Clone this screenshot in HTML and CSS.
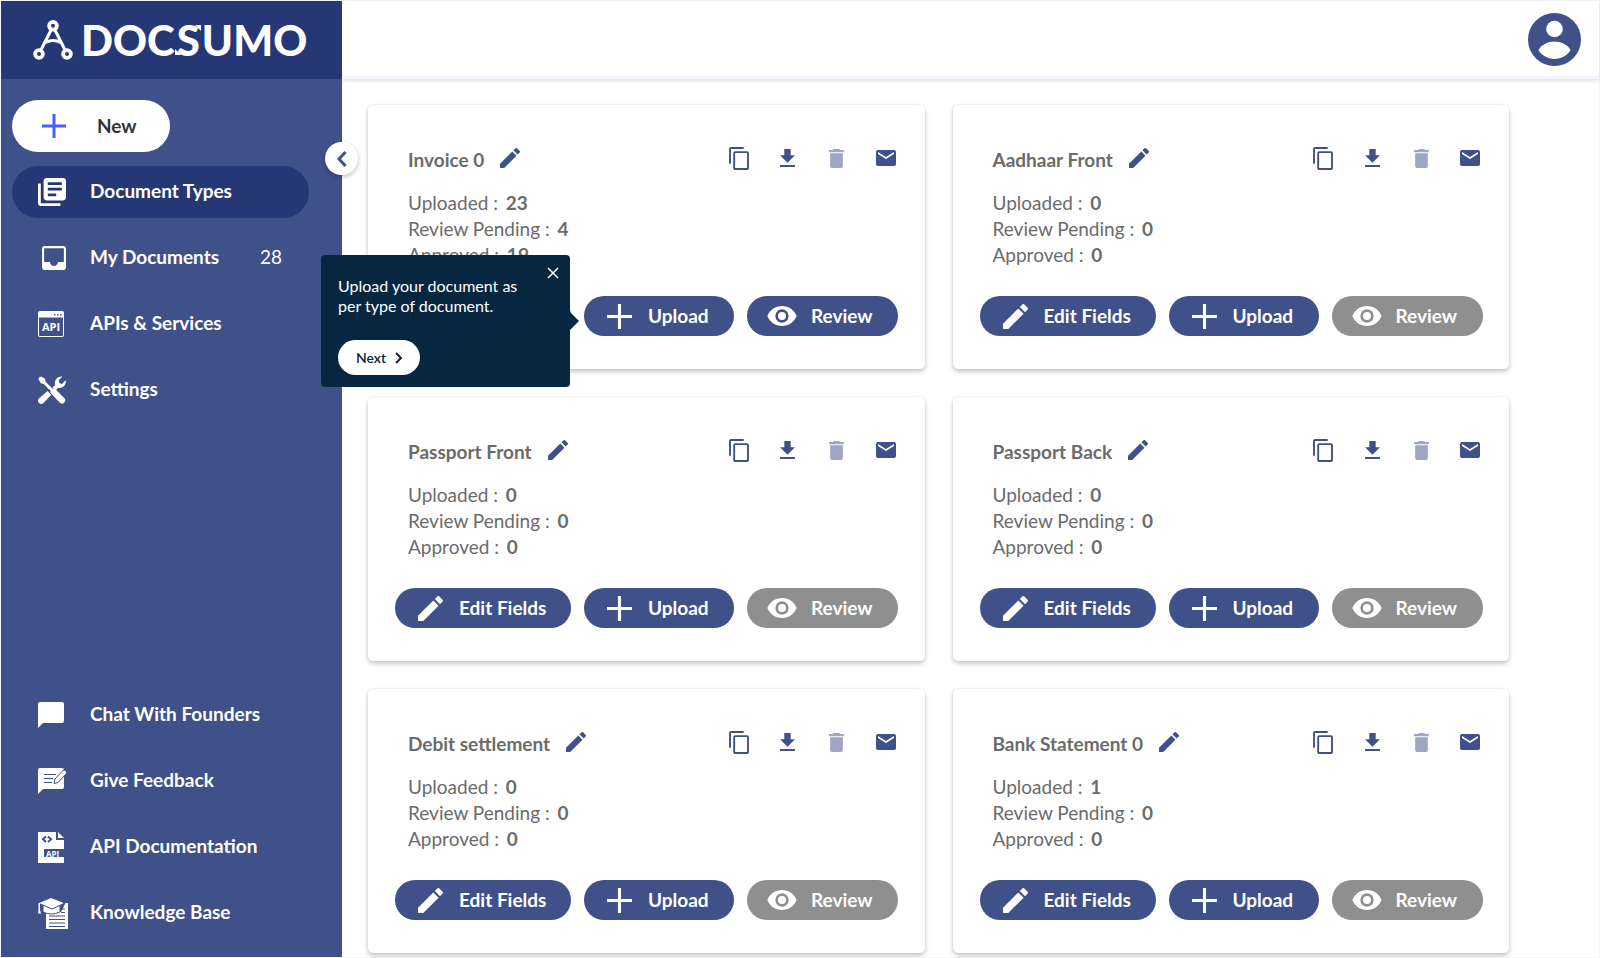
FILE: index.html
```html
<!DOCTYPE html>
<html lang="en">
<head>
    <meta charset="UTF-8">
    <meta name="viewport" content="width=device-width, initial-scale=1.0">
    <title>Docsumo - Document Types</title>
    <link rel="stylesheet" href="styles.css">
</head>
<body>
    <svg class="sprite" aria-hidden="true">
        <symbol id="pencil" viewBox="3 3 18 18">
            <path d="M3 17.25V21h3.75L17.81 9.94l-3.75-3.75L3 17.25zM20.71 7.04a1 1 0 0 0 0-1.41l-2.34-2.34a1 1 0 0 0-1.41 0l-1.83 1.83 3.75 3.75 1.83-1.83z"/>
        </symbol>
        <symbol id="plus" viewBox="0 0 24 24">
            <path d="M10.500 0h3v10.500H24v3H13.500V24h-3V13.500H0v-3h10.500z"/>
        </symbol>
        <symbol id="eye" viewBox="1 4.500 22 15">
            <path d="M12 4.500C7 4.500 2.730 7.610 1 12c1.730 4.390 6 7.500 11 7.500s9.270-3.110 11-7.500c-1.730-4.390-6-7.500-11-7.500zM12 17a5 5 0 1 1 0-10 5 5 0 0 1 0 10zm0-8a3 3 0 1 0 0 6 3 3 0 0 0 0-6z"/>
        </symbol>
        <symbol id="copy" viewBox="2 1 19 22">
            <path d="M16 1H4c-1.100 0-2 .9-2 2v14h1.800V2.800H16V1zm3 4H8c-1.100 0-2 .9-2 2v14c0 1.100.9 2 2 2h11c1.100 0 2-.9 2-2V7c0-1.100-.9-2-2-2zm.2 16.200H7.800V6.800h11.400v14.400z"/>
        </symbol>
        <symbol id="download" viewBox="5 3 14 17">
            <path d="M19 9h-4V3H9v6H5l7 7 7-7zM5 18v2h14v-2H5z"/>
        </symbol>
        <symbol id="trash" viewBox="5 3 14 18">
            <path d="M6 19c0 1.100.9 2 2 2h8c1.100 0 2-.9 2-2V7H6v12zM19 4h-3.500l-1-1h-5l-1 1H5v2h14V4z"/>
        </symbol>
        <symbol id="mail" viewBox="2 4 20 16">
            <path d="M20 4H4c-1.100 0-2 .9-2 2v12c0 1.100.9 2 2 2h16c1.100 0 2-.9 2-2V6c0-1.100-.9-2-2-2zm0 4l-8 5-8-5V6l8 5 8-5v2z"/>
        </symbol>
    </svg>

    <div class="app">
        <aside class="sidebar">
            <a href="#" class="logo" aria-label="Docsumo">
                <svg class="logo-mark" viewBox="0 0 40 40">
                    <g fill="none" stroke="#fff">
                        <circle cx="20" cy="5.800" r="3.900" stroke-width="3.800"/>
                        <circle cx="6" cy="34" r="3.900" stroke-width="3.800"/>
                        <circle cx="34" cy="34" r="3.900" stroke-width="3.800"/>
                        <path d="M18.300 9.500L7.800 30.300M21.700 9.500l10.500 20.800M12.500 22.500q7.500-4 15 0" stroke-width="3"/>
                    </g>
                </svg>
                <span class="logo-text">DOC<span class="logo-s">S</span>UMO</span>
            </a>

            <button type="button" class="new-btn">
                <svg viewBox="0 0 24 24"><use href="#plus"/></svg>
                <span>New</span>
            </button>

            <nav class="menu">
                <a href="#" class="menu-item active">
                    <svg viewBox="2 2 20 20"><path d="M4 6H2v14c0 1.100.9 2 2 2h14v-2H4V6zm16-4H8c-1.100 0-2 .9-2 2v12c0 1.100.9 2 2 2h12c1.100 0 2-.9 2-2V4c0-1.100-.9-2-2-2zm-1 9H9V9h10v2zm-4 4H9v-2h6v2zm4-8H9V5h10v2z"/></svg>
                    <span>Document Types</span>
                </a>
                <a href="#" class="menu-item">
                    <svg viewBox="0 3 21 18"><path d="M19 3H5c-1.100 0-2 .9-2 2v14c0 1.100.9 2 2 2h14c1.100 0 2-.9 2-2V5c0-1.100-.9-2-2-2zm.4 12H15c0 1.660-1.350 3-3 3s-3-1.340-3-3H4.600V4.600h14.800V15z"/></svg>
                    <span>My Documents</span>
                    <span class="count">28</span>
                </a>
                <a href="#" class="menu-item">
                    <svg viewBox="0 0 28 26">
                        <path fill-rule="evenodd" d="M2 0h22a2 2 0 0 1 2 2v22a2 2 0 0 1-2 2H2a2 2 0 0 1-2-2V2a2 2 0 0 1 2-2zM1 6.500V24a1 1 0 0 0 1 1h22a1 1 0 0 0 1-1V6.500zM16 3h1.500v1.500H16zM19 3h1.500v1.500H19zM22 3h1.500v1.500H22z"/>
                        <text x="13" y="20" class="icon-text">API</text>
                    </svg>
                    <span>APIs &amp; Services</span>
                </a>
                <a href="#" class="menu-item">
                    <svg viewBox="0 0 28 28">
                        <path d="M.5 3.200A2.600 2.600 0 0 1 3.500.8l3.500 2 .6 3 7 7c1-.6 2-.4 2.900.4l8.700 8.700a3.200 3.200 0 0 1-4.600 4.700l-8.500-9c-.8-.9-.9-1.800-.4-2.700l-7-7-2.900-.6z"/>
                        <path d="M.9 22.500l8.600-7.500 3.700 3.900-8 8.300a3.200 3.200 0 0 1-4.300-4.700zM14.500 11.500l2.500-2.300C16 4.500 19.500 0 24.300.6L20.600 4.500l.8 2.600 2.600.8 3.600-3.700c1.300 4.600-3 8.500-7.600 7.800l-2.200 2.200z"/>
                    </svg>
                    <span>Settings</span>
                </a>
            </nav>

            <nav class="menu menu-bottom">
                <a href="#" class="menu-item">
                    <svg viewBox="0 0 28 26"><path d="M2 0h22a2 2 0 0 1 2 2v17a2 2 0 0 1-2 2H5l-5 5V2a2 2 0 0 1 2-2z"/></svg>
                    <span>Chat With Founders</span>
                </a>
                <a href="#" class="menu-item">
                    <svg viewBox="0 0 28 26">
                        <path d="M2 0h22a2 2 0 0 1 2 2v17a2 2 0 0 1-2 2H5l-5 5V2a2 2 0 0 1 2-2z"/>
                        <path class="cut" d="M6 6.500h12M6 10.500h9M6 14.500h8"/>
                        <path class="outlined" d="M16 15.500l1-4.500 7.500-8a2.300 2.300 0 0 1 3.500 3l-8 8.500z"/>
                    </svg>
                    <span>Give Feedback</span>
                </a>
                <a href="#" class="menu-item">
                    <svg class="tall" viewBox="0 0 28 31">
                        <path d="M0 0h18v8h8v9H6v8h20v6H0zM20 0l6 6h-6z"/>
                        <path class="cut bold" d="M8 4.500L5 7.200l3 2.700M10 4.500l3 2.700-3 2.700"/>
                        <text x="14.500" y="24.500" class="icon-text small">API</text>
                    </svg>
                    <span>API Documentation</span>
                </a>
                <a href="#" class="menu-item">
                    <svg class="tall" viewBox="0 0 28 31">
                        <path d="M8 14h15l4.500-9H30v26H8z"/>
                        <path class="cut" d="M11 18h16M11 21.500h16M11 25h16M23 14.500h4M23 11h4M11 28.500h16"/>
                        <path class="outlined" d="M5 7v7q8 4 17 0V7z"/>
                        <path class="outlined" d="M0 5l13-5.500L27 5l-13 6z"/>
                        <path d="M.5 5h1.500v7l1 3.500H0L.5 12z"/>
                    </svg>
                    <span>Knowledge Base</span>
                </a>
            </nav>

            <button type="button" class="collapse-btn" aria-label="Collapse menu">
                <svg viewBox="0 0 10 16"><path d="M8.500 1L2 8l6.500 7"/></svg>
            </button>
        </aside>

        <div class="content">
            <header class="topbar">
                <button type="button" class="avatar" aria-label="Account">
                    <svg viewBox="0 0 53 53">
                        <circle cx="26.500" cy="26.500" r="26.500" fill="#405089"/>
                        <circle cx="26.500" cy="16" r="8.300" fill="#fff"/>
                        <path fill="#fff" d="M10.500 37c3-5.500 9.500-8.500 16-8.500s13 3 16 8.500c-3 5.500-9.500 9-16 9s-13-3.500-16-9z"/>
                    </svg>
                </button>
            </header>
            <main class="cards" id="cards"></main>
        </div>
    </div>

    <script>
        const docTypes = [
            { name: 'Invoice 0', uploaded: 23, pending: 4, approved: 19, tour: true },
            { name: 'Aadhaar Front', uploaded: 0, pending: 0, approved: 0 },
            { name: 'Passport Front', uploaded: 0, pending: 0, approved: 0 },
            { name: 'Passport Back', uploaded: 0, pending: 0, approved: 0 },
            { name: 'Debit settlement', uploaded: 0, pending: 0, approved: 0 },
            { name: 'Bank Statement 0', uploaded: 1, pending: 0, approved: 0 }
        ];

        const icon = (name) => `<svg class="icon-${name}"><use href="#${name}"/></svg>`;

        const tour = `
            <div class="tour" role="dialog" aria-label="Upload help">
                <button type="button" class="tour-close" aria-label="Close">
                    <svg viewBox="0 0 10 10"><path d="M0 0l10 10M10 0L0 10"/></svg>
                </button>
                <p>Upload your document as per type of document.</p>
                <button type="button" class="tour-next">
                    Next
                    <svg viewBox="0 0 7 10"><path d="M1 0l5 5-5 5"/></svg>
                </button>
            </div>`;

        document.getElementById('cards').innerHTML = docTypes.map((doc) => `
            <section class="card">
                <div class="card-header">
                    <h2>${doc.name}</h2>
                    <button type="button" class="icon-btn rename" aria-label="Rename">${icon('pencil')}</button>
                    <div class="tools">
                        <button type="button" class="icon-btn" aria-label="Copy">${icon('copy')}</button>
                        <button type="button" class="icon-btn" aria-label="Download">${icon('download')}</button>
                        <button type="button" class="icon-btn" aria-label="Delete" disabled>${icon('trash')}</button>
                        <button type="button" class="icon-btn" aria-label="Email">${icon('mail')}</button>
                    </div>
                </div>
                <ul class="stats">
                    <li>Uploaded : <b>${doc.uploaded}</b></li>
                    <li>Review Pending : <b>${doc.pending}</b></li>
                    <li>Approved : <b>${doc.approved}</b></li>
                </ul>
                <div class="actions">
                    <button type="button" class="btn btn-edit">${icon('pencil')}<span>Edit Fields</span></button>
                    <div class="upload-wrap">
                        <button type="button" class="btn btn-upload">${icon('plus')}<span>Upload</span></button>
                        ${doc.tour ? tour : ''}
                    </div>
                    <button type="button" class="btn btn-review" ${doc.pending ? '' : 'disabled'}>${icon('eye')}<span>Review</span></button>
                </div>
            </section>`).join('');
    </script>
</body>
</html>
```
FILE: styles.css
```css
* {
    box-sizing: border-box;
}
body {
    margin: 0;
    font-family: Lato, "Open Sans", sans-serif;
    font-size: 19px;
    color: #6b6b6b;
    background: #fff;
}
button {
    font: inherit;
    border: none;
    padding: 0;
    background: none;
    cursor: pointer;
}
svg {
    display: block;
    fill: currentColor;
    flex-shrink: 0;
}
.sprite {
    display: none;
}
.app {
    display: flex;
    min-height: 100vh;
    border: 1px solid #f4f5fd;
}

/* sidebar */
.sidebar {
    position: relative;
    z-index: 2;
    width: 341px;
    flex-shrink: 0;
    display: flex;
    flex-direction: column;
    padding-bottom: 18px;
    background: #405089;
    color: #fff;
}
.logo {
    display: flex;
    align-items: center;
    gap: 8px;
    height: 78px;
    padding-left: 32px;
    background: #253775;
    color: #fff;
    text-decoration: none;
}
.logo-mark {
    width: 40px;
    height: 40px;
}
.logo-text {
    font-size: 42px;
    font-weight: 900;
    line-height: 50px;
}
/* arrow tips on both ends of the S */
.logo-s {
    position: relative;
    margin: 0 2px;
}
.logo-s::before,
.logo-s::after {
    content: "";
    position: absolute;
    border: 3px solid transparent;
}
.logo-s::before {
    top: 10px;
    right: -1px;
    border-top-color: #fff;
    border-right-color: #fff;
}
.logo-s::after {
    bottom: 10px;
    left: -2px;
    border-bottom-color: #fff;
    border-left-color: #fff;
}
.new-btn {
    display: flex;
    align-items: center;
    gap: 31px;
    width: 158px;
    height: 52px;
    margin: 21px 0 14px 11px;
    padding-left: 30px;
    border-radius: 26px;
    background: #fff;
    color: #333;
    font-weight: bold;
}
.new-btn span,
.btn span {
    padding-bottom: 2px;
}
.new-btn svg {
    width: 24px;
    height: 24px;
    color: #4a5cff;
}
.menu {
    display: flex;
    flex-direction: column;
    gap: 14px;
    margin: 0 33px 0 11px;
}
.menu-bottom {
    margin-top: auto;
}
.menu-item {
    display: flex;
    align-items: center;
    gap: 24px;
    height: 52px;
    padding: 0 27px 0 26px;
    border-radius: 26px;
    color: #fff;
    font-weight: bold;
    text-decoration: none;
}
.menu-item.active {
    background: #253775;
}
.menu-item svg {
    width: 28px;
    height: 28px;
}
.menu-item svg.tall {
    height: 31px;
    overflow: visible;
}
.menu-item span {
    padding-bottom: 3px;
}
.menu-item .count {
    margin-left: auto;
    font-weight: normal;
}
.icon-text {
    font: bold 11px "Open Sans", sans-serif;
    text-anchor: middle;
}
.icon-text.small {
    font-size: 8px;
}
.cut {
    fill: none;
    stroke: #405089;
    stroke-width: 1;
}
.cut.bold {
    stroke-width: 2;
}
.outlined {
    stroke: #405089;
    stroke-width: 1;
}
.collapse-btn {
    position: absolute;
    top: 141px;
    right: -16px;
    display: flex;
    align-items: center;
    justify-content: center;
    width: 33px;
    height: 33px;
    border-radius: 50%;
    background: #fff;
    color: #405089;
    box-shadow: 0 2px 5px rgba(0,0,0,0.25);
}
.collapse-btn svg {
    width: 10px;
    height: 16px;
    fill: none;
    stroke: currentColor;
    stroke-width: 3;
}

/* content */
.content {
    flex: 1;
    min-width: 0;
}
.topbar {
    display: flex;
    align-items: center;
    justify-content: flex-end;
    height: 78px;
    padding: 2px 18px 0 0;
    border-bottom: 3px solid #f4f5fd;
    box-shadow: 0 2px 4px rgba(0,0,0,0.12);
}
.avatar svg {
    width: 53px;
    height: 53px;
}
.cards {
    position: relative;
    z-index: 3;
    display: grid;
    grid-template-columns: 1fr 1fr;
    gap: 28px;
    padding: 26px 90px 3px 26px;
}
.card {
    padding: 39px 26px 33px 27px;
    border-radius: 5px;
    box-shadow: 0 3px 5px rgba(0,0,0,0.2), 0 0 3px rgba(0,0,0,0.1);
}
.card-header {
    display: flex;
    align-items: center;
    height: 28px;
    padding-left: 13px;
}
.card-header h2 {
    margin: 4px 0 0;
    font-size: 19px;
    line-height: 24px;
}
.icon-btn {
    display: flex;
    justify-content: center;
    width: 20px;
    color: #405089;
}
.icon-btn:disabled {
    opacity: 0.5;
}
.rename {
    margin-left: 16px;
}
.tools {
    display: flex;
    align-items: center;
    gap: 29px;
    margin-left: auto;
    padding-right: 3px;
}
.icon-pencil {
    width: 20px;
    height: 20px;
}
.icon-copy {
    width: 20px;
    height: 23px;
}
.icon-download {
    width: 15px;
    height: 18px;
}
.icon-trash {
    width: 15px;
    height: 19px;
}
.icon-mail {
    width: 20px;
    height: 16px;
}
.stats {
    list-style: none;
    margin: 18px 0 28px 13px;
    padding: 0;
    line-height: 26px;
}
.stats b {
    margin-left: 3px;
}
.actions {
    display: flex;
    gap: 13px;
}
.btn {
    display: flex;
    align-items: center;
    height: 40px;
    border-radius: 20px;
    background: #405089;
    color: #fff;
    font-weight: bold;
}
.btn:disabled {
    background: #8f8f8f;
}
.btn svg {
    width: 25px;
    height: 25px;
}
.btn-edit {
    gap: 16px;
    width: 176px;
    padding-left: 23px;
}
.btn-upload {
    gap: 16px;
    width: 150px;
    padding-left: 23px;
}
.btn-review {
    gap: 14px;
    width: 151px;
    padding-left: 20px;
}
.btn svg.icon-eye {
    width: 30px;
    height: 20px;
}

/* product tour popup */
.upload-wrap {
    position: relative;
}
.tour {
    position: absolute;
    right: 164px;
    bottom: -51px;
    width: 249px;
    height: 132px;
    padding: 21px 40px 12px 17px;
    border-radius: 4px;
    background: #06273f;
    color: #fff;
    font-size: 16px;
    line-height: 20px;
}
.tour::after {
    content: "";
    position: absolute;
    left: 100%;
    top: 57px;
    border: 9px solid transparent;
    border-right: none;
    border-left-color: #06273f;
}
.tour p {
    margin: 0 0 24px;
}
.tour-close {
    position: absolute;
    top: 13px;
    right: 12px;
    color: #fff;
}
.tour-close svg {
    width: 10px;
    height: 10px;
    overflow: visible;
    stroke: currentColor;
    stroke-width: 1.5;
}
.tour-next {
    display: flex;
    align-items: center;
    justify-content: center;
    gap: 9px;
    width: 82px;
    height: 35px;
    border-radius: 18px;
    background: #fff;
    color: #06273f;
    font-size: 14px;
    font-weight: 600;
}
.tour-next svg {
    width: 7px;
    height: 10px;
    overflow: visible;
    fill: none;
    stroke: currentColor;
    stroke-width: 2;
}
```
